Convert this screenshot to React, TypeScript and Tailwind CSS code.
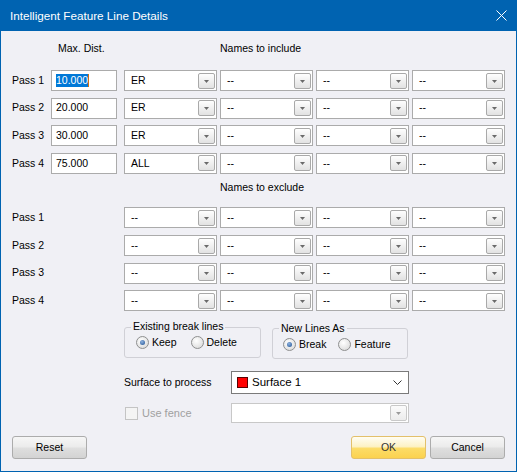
import React from 'react';

const font = "font-['Liberation_Sans',Arial,sans-serif]";

const DropButton: React.FC<{ disabled?: boolean }> = ({ disabled }) => (
  <div
    className={`w-[17px] h-[16px] rounded-[2px] border flex items-center justify-center ${
      disabled
        ? 'border-[#c9c9c9] bg-[linear-gradient(#fbfbfb,#ececec)]'
        : 'border-[#a9a9a9] bg-[linear-gradient(#fefefe,#e2e2e2)]'
    }`}
  >
    <svg width="5" height="3" viewBox="0 0 5 3" className="mt-[1px]">
      <path d="M0 0H5L2.5 3Z" fill={disabled ? '#9a9a9a' : '#6a6a6a'} />
    </svg>
  </div>
);

const Combo: React.FC<{ value: string }> = ({ value }) => (
  <div className="w-[93px] h-[21px] bg-white border border-[#ababab] flex items-center justify-between pl-[6px] pr-[1px]">
    <span>{value}</span>
    <DropButton />
  </div>
);

const Radio: React.FC<{ checked?: boolean; label: string; className?: string }> = ({ checked, label, className }) => (
  <div className={`flex items-center gap-[3px] ${className ?? ''}`}>
    <div className="w-[13px] h-[13px] rounded-full border border-[#8e8f8f] bg-[radial-gradient(circle_at_40%_35%,#ffffff,#d4d4d4)] flex items-center justify-center">
      {checked && (
        <div className="w-[5px] h-[5px] rounded-full bg-[radial-gradient(circle_at_40%_35%,#8fb3e0,#1d4f91)]" />
      )}
    </div>
    <span>{label}</span>
  </div>
);

const GroupBox: React.FC<{ title: string; width: string; children: React.ReactNode; className?: string }> = ({
  title,
  width,
  children,
  className,
}) => (
  <div className={`relative ${width} ${className ?? ''}`}>
    <div className="mt-[6.5px] h-[31px] border border-[#d0d0d6] rounded-[3px] pl-[11px] pt-[1px] flex items-center">
      {children}
    </div>
    <span className="absolute top-0 left-[7px] px-[2px] leading-[13px] bg-[#f0f0f5]">{title}</span>
  </div>
);

const WinButton: React.FC<{ label: string; primary?: boolean }> = ({ label, primary }) => (
  <div
    className={`w-[75px] h-[23px] rounded-[3px] border flex items-center justify-center ${
      primary
        ? 'border-[#e3c06a] bg-[linear-gradient(#fffdf3_0%,#fdf2c6_45%,#fcdc68_55%,#fbd24f_100%)] text-[#333]'
        : 'border-[#acacac] bg-[linear-gradient(#f6f6f6_0%,#ececec_45%,#dedede_55%,#d3d3d3_100%)] text-black'
    }`}
  >
    {label}
  </div>
);

const includeRows = [
  { pass: 'Pass 1', dist: '10.000', name: 'ER' },
  { pass: 'Pass 2', dist: '20.000', name: 'ER' },
  { pass: 'Pass 3', dist: '30.000', name: 'ER' },
  { pass: 'Pass 4', dist: '75.000', name: 'ALL' },
];

export default function App() {
  return (
    <div className={`w-[517px] h-[472px] flex flex-col text-[10.5px] text-black ${font}`}>
      <div className="h-[31px] bg-[#0063b1] flex items-center justify-between pl-[10px] pr-[10px] text-white">
        <span className="text-[11.7px]">Intelligent Feature Line Details</span>
        <svg width="11" height="11" viewBox="0 0 11 11">
          <path d="M0.5 0.5L10.5 10.5M10.5 0.5L0.5 10.5" stroke="white" strokeWidth="1" />
        </svg>
      </div>

      <div className="flex-1 flex flex-col bg-[#f0f0f5] border-x border-b border-[#0063b1] pl-[11px] pr-[11px]">
        <div className="mt-[11px] h-[13px] leading-[13px] flex">
          <span className="ml-[46px] w-[162px]">Max. Dist.</span>
          <span>Names to include</span>
        </div>

        <div className="mt-[15px] flex flex-col gap-[6.67px]">
          {includeRows.map((r, i) => (
            <div key={r.pass} className="flex items-center h-[21px]">
              <span className="w-[39px]">{r.pass}</span>
              <div className="w-[66px] h-[21px] bg-white border border-[#ababab] flex items-center pl-[4px] mr-[7px]">
                {i === 0 ? (
                  <>
                    <span className="bg-[#0078d7] text-white leading-[13px]">{r.dist}</span>
                    <span className="w-[1px] h-[13px] bg-[#d07010]" />
                  </>
                ) : (
                  <span>{r.dist}</span>
                )}
              </div>
              <div className="flex gap-[3px]">
                <Combo value={r.name} />
                <Combo value="--" />
                <Combo value="--" />
                <Combo value="--" />
              </div>
            </div>
          ))}
        </div>

        <div className="mt-[7.5px] h-[13px] leading-[13px] ml-[208px]">Names to exclude</div>

        <div className="mt-[13px] flex flex-col gap-[6.67px]">
          {['Pass 1', 'Pass 2', 'Pass 3', 'Pass 4'].map((p) => (
            <div key={p} className="flex items-center h-[21px]">
              <span className="w-[112px]">{p}</span>
              <div className="flex gap-[3px]">
                <Combo value="--" />
                <Combo value="--" />
                <Combo value="--" />
                <Combo value="--" />
              </div>
            </div>
          ))}
        </div>

        <div className="mt-[9px] ml-[112px] flex items-start gap-[11px]">
          <GroupBox title="Existing break lines" width="w-[137px]">
            <Radio checked label="Keep" />
            <Radio label="Delete" className="ml-[14px]" />
          </GroupBox>
          <GroupBox title="New Lines As" width="w-[136px]" className="mt-[1.5px]">
            <Radio checked label="Break" className="ml-[-1px]" />
            <Radio label="Feature" className="ml-[12px]" />
          </GroupBox>
        </div>

        <div className="mt-[12px] ml-[112px] flex items-center">
          <span className="w-[107px]">Surface to process</span>
          <div className="w-[178px] h-[23px] bg-white border border-[#7a7a7a] flex items-center pl-[5px] pr-[6px]">
            <div className="w-[11px] h-[11px] bg-[#ff0000] border border-[#5a0000]" />
            <span className="ml-[4px] text-[11.5px]">Surface 1</span>
            <svg width="9" height="5" viewBox="0 0 9 5" className="ml-auto">
              <path d="M0.5 0.5L4.5 4.5L8.5 0.5" stroke="#333" strokeWidth="1" fill="none" />
            </svg>
          </div>
        </div>

        <div className="mt-[9px] ml-[112px] flex items-center">
          <div className="w-[107px] flex items-center">
            <div className="ml-[1px] w-[13px] h-[13px] border border-[#c4c4c4] bg-[#f4f4f4]" />
            <span className="ml-[4px] text-[#a0a0a0] text-[11px]">Use fence</span>
          </div>
          <div className="w-[178px] h-[20px] bg-white border border-[#c8c8c8] flex items-center justify-end pr-[1px]">
            <DropButton disabled />
          </div>
        </div>

        <div className="mt-[13px] flex items-center justify-between">
          <WinButton label="Reset" />
          <div className="flex gap-[4px]">
            <WinButton label="OK" primary />
            <WinButton label="Cancel" />
          </div>
        </div>
      </div>
    </div>
  );
}
